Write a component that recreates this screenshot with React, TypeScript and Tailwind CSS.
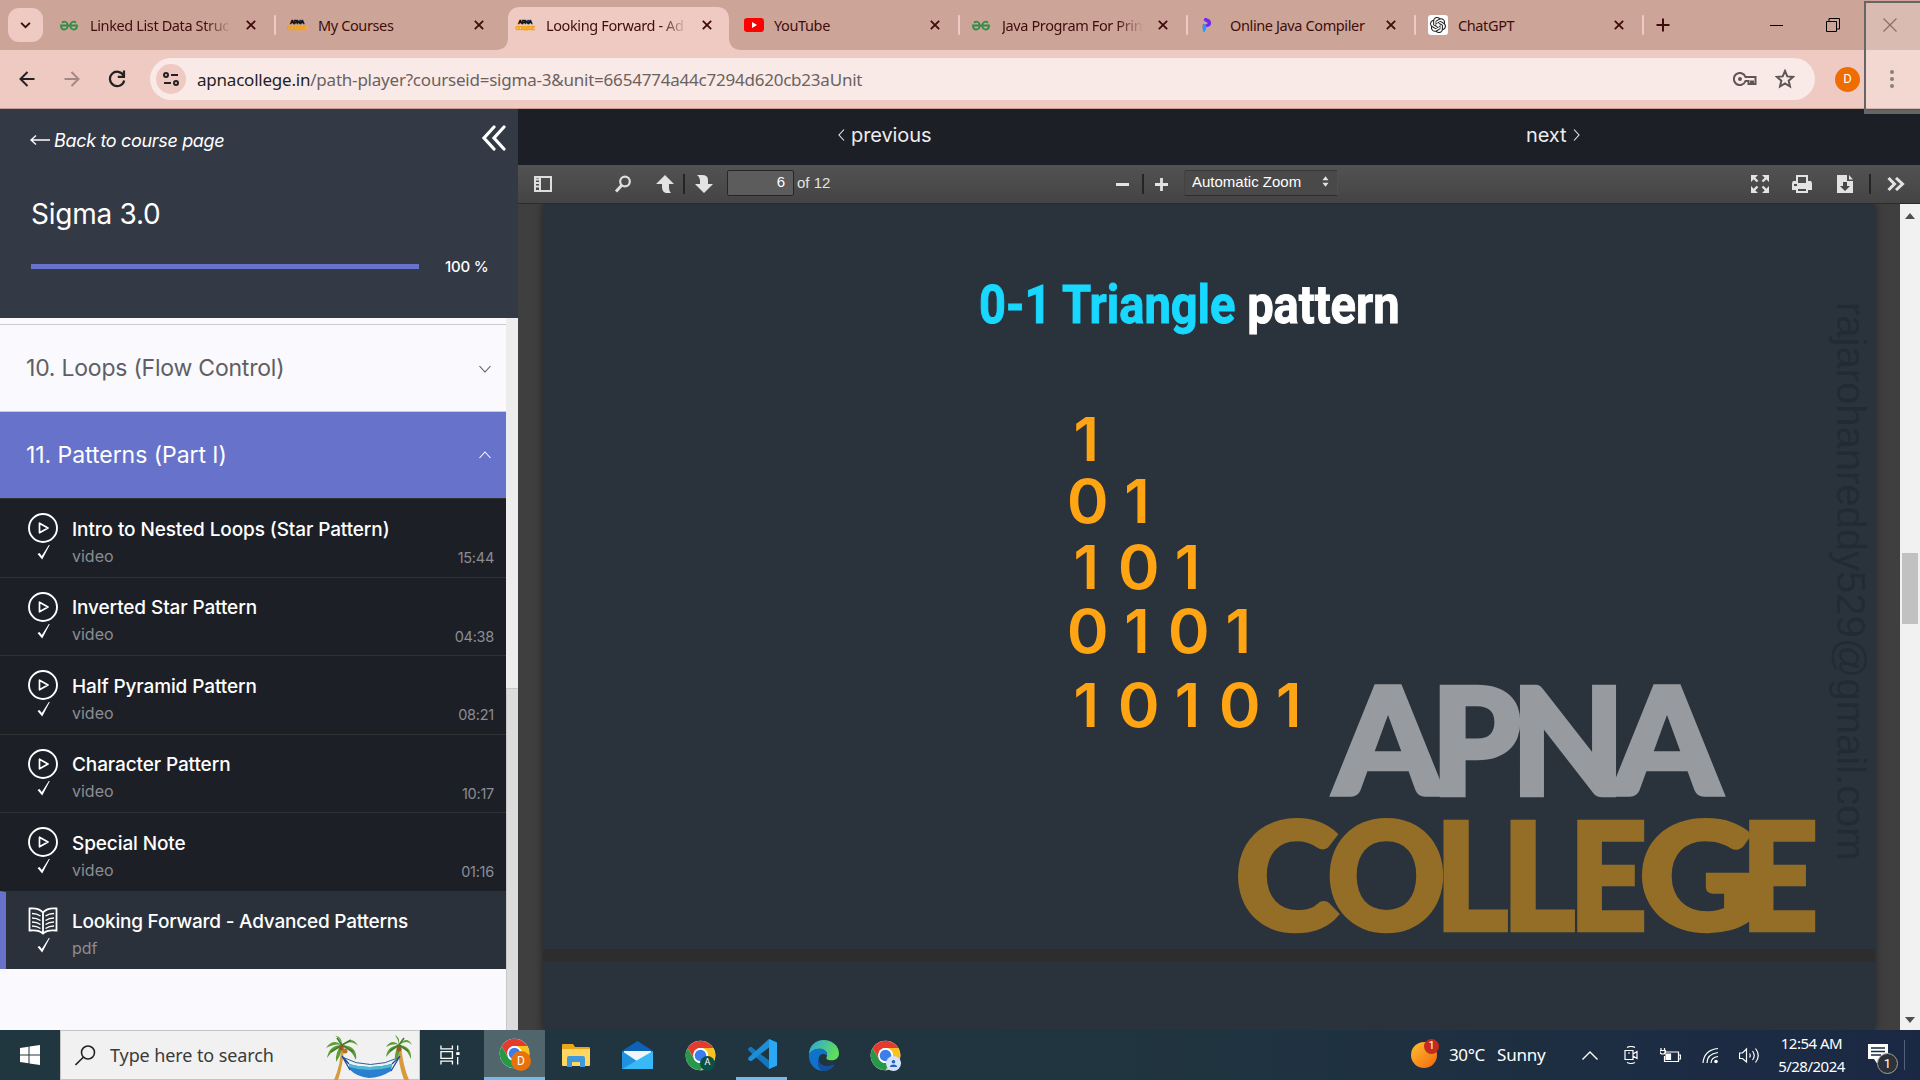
import React from "react";

type P = { children?: React.ReactNode; className?: string };

function ChromeLogo({ className = "" }: P) {
  return (
    <svg viewBox="0 0 48 48" className={className}>
      <circle cx="24" cy="24" r="23" fill="#fff" />
      <path d="M4.1 12.5 A23 23 0 0 1 43.9 12.5 H24 A11.5 11.5 0 0 0 14 18.3 L14 29.7Z" fill="#e33b2e" />
      <path d="M43.9 12.5 A23 23 0 0 1 24 47 L34 29.7 A11.5 11.5 0 0 0 24 12.5Z" fill="#fcc31e" />
      <path d="M4.1 12.5 A23 23 0 0 0 24 47 L34 29.7 A11.5 11.5 0 0 1 14 29.7Z" fill="#279847" />
      <circle cx="24" cy="24" r="11.5" fill="#fff" />
      <circle cx="24" cy="24" r="9" fill="#3b7ded" />
    </svg>
  );
}

function Gfg() {
  return (
    <svg viewBox="0 0 36 20" className="h-[11px] w-[18px]" fill="none" stroke="#2f8d46" strokeWidth="3.6">
      <path d="M4 4.5 C9 0 15.500 3 15.500 10 C15.500 16 11 18 8.500 18 C4 18 2 14.500 2 10 H34 C34 14.500 32 18 27.500 18 C25 18 20.500 16 20.500 10 C20.500 3 27 0 32 4.500" />
    </svg>
  );
}

function ApnaIcon() {
  return (
    <span className="flex w-[18px] flex-col items-center font-['Lato'] font-black">
      <span className="h-[6px] text-[5.500px] leading-[6px] tracking-[-0.5px] text-[#111] [-webkit-text-stroke:0.6px_#111]">APNA</span>
      <span className="h-[6px] text-[5.500px] leading-[6px] tracking-[-0.8px] text-[#f5a21b] [-webkit-text-stroke:0.6px_#f5a21b]">COLLEGE</span>
    </span>
  );
}

function YouTube() {
  return (
    <svg viewBox="0 0 20 14" className="h-[14px] w-5">
      <rect width="20" height="14" rx="3.200" fill="#f00" />
      <path d="M8 4 L13 7 L8 10Z" fill="#fff" />
    </svg>
  );
}

function Programiz() {
  return (
    <svg viewBox="0 0 12 17" className="ml-[2px] h-[16px] w-[10px]">
      <path d="M3 0 C8 0 11 3 11 6 C11 9 8 11 5 11 L1 13 V8 C4 8 6 8 7 6 L2 3Z" fill="#7326f1" />
      <path d="M1 9 L5 7 V13 L3 17 L1 16Z" fill="#12a1fb" />
    </svg>
  );
}

function OpenAI() {
  return (
    <span className="flex h-5 w-5 items-center justify-center rounded-[3px] bg-white">
      <svg viewBox="0 0 24 24" className="h-4 w-4" fill="#222">
        <path d="M22.282 9.821a5.985 5.985 0 0 0-.516-4.910 6.046 6.046 0 0 0-6.510-2.900A6.065 6.065 0 0 0 4.981 4.182a5.985 5.985 0 0 0-3.998 2.900 6.046 6.046 0 0 0 .743 7.097 5.980 5.980 0 0 0 .510 4.911 6.051 6.051 0 0 0 6.515 2.900A5.985 5.985 0 0 0 13.260 24a6.056 6.056 0 0 0 5.772-4.206 5.990 5.990 0 0 0 3.997-2.900 6.056 6.056 0 0 0-.747-7.073zM13.260 22.430a4.476 4.476 0 0 1-2.876-1.040l.141-.081 4.779-2.758a.795.795 0 0 0 .392-.681v-6.737l2.020 1.168a.071.071 0 0 1 .038.052v5.583a4.504 4.504 0 0 1-4.494 4.494zM3.600 18.304a4.470 4.470 0 0 1-.535-3.014l.142.085 4.783 2.759a.771.771 0 0 0 .780 0l5.843-3.369v2.332a.080.080 0 0 1-.033.062L9.740 19.950a4.500 4.500 0 0 1-6.140-1.646zM2.340 7.896a4.485 4.485 0 0 1 2.366-1.973V11.600a.766.766 0 0 0 .388.676l5.815 3.355-2.020 1.168a.076.076 0 0 1-.071 0l-4.830-2.786A4.504 4.504 0 0 1 2.340 7.872zm16.597 3.855-5.833-3.387L15.119 7.200a.076.076 0 0 1 .071 0l4.830 2.791a4.494 4.494 0 0 1-.676 8.105v-5.678a.790.790 0 0 0-.407-.667zm2.010-3.023-.141-.085-4.774-2.782a.776.776 0 0 0-.785 0L9.409 9.230V6.897a.066.066 0 0 1 .028-.061l4.830-2.787a4.500 4.500 0 0 1 6.680 4.660zm-12.640 4.135-2.020-1.164a.080.080 0 0 1-.038-.057V6.075a4.500 4.500 0 0 1 7.375-3.453l-.142.080L8.704 5.460a.795.795 0 0 0-.393.681zm1.097-2.365 2.602-1.500 2.607 1.500v2.999l-2.597 1.500-2.607-1.500z" />
      </svg>
    </span>
  );
}

const tabs = [
  { title: "Linked List Data Struc", icon: <Gfg />, fade: true, sep: true },
  { title: "My Courses", icon: <ApnaIcon />, fade: false, sep: false },
  { title: "Looking Forward - Ad", icon: <ApnaIcon />, fade: true, sep: false, active: true },
  { title: "YouTube", icon: <YouTube />, fade: false, sep: true },
  { title: "Java Program For Prin", icon: <Gfg />, fade: true, sep: true },
  { title: "Online Java Compiler", icon: <Programiz />, fade: false, sep: true },
  { title: "ChatGPT", icon: <OpenAI />, fade: false, sep: true },
];

function TabStrip() {
  return (
    <div className="flex h-[50px] bg-[#cda598] font-['Noto_Sans',sans-serif] text-[#3f0d0b]">
      <div className="mt-2 ml-2 flex h-[34px] w-[35px] items-center justify-center rounded-[11px] bg-[#efcac2]">
        <svg viewBox="0 0 12 8" className="h-[7px] w-[11px]" fill="none" stroke="#3f0d0b" strokeWidth="2.200">
          <path d="M1 1 L6 6 L11 1" />
        </svg>
      </div>
      <div className="ml-[6px] flex">
        {tabs.map((t) => (
          <div
            key={t.title}
            className={
              "relative flex h-[50px] w-[228px] items-center pl-[11px] " +
              (t.active ? "z-10" : "")
            }
          >
            {t.active && (
              <svg viewBox="0 0 245 43" className="absolute top-[7px] left-[-9px] h-[43px] w-[245px]" fill="#efcac2">
                <path d="M0 43 C8 43 12 38 12 31 V12 C12 4 17 0 24 0 H221 C228 0 233 4 233 12 V31 C233 38 237 43 245 43Z" />
              </svg>
            )}
            <span className="relative flex w-5 items-center">{t.icon}</span>
            <span
              className={
                "relative mt-px ml-[10px] w-[143px] overflow-hidden text-[14.500px] tracking-[-0.38px] whitespace-nowrap " +
                (t.fade ? "[mask-image:linear-gradient(to_right,#000_80%,transparent_99%)]" : "")
              }
            >
              {t.title}
            </span>
            <svg viewBox="0 0 12 12" className="relative ml-[13px] h-[10px] w-[10px]" stroke="#3f0d0b" strokeWidth="2.200">
              <path d="M1 1 L11 11 M11 1 L1 11" />
            </svg>
            {t.sep && <span className="absolute top-[15px] right-px h-5 w-[2px] rounded bg-[#efcac2]" />}
          </div>
        ))}
      </div>
      <svg viewBox="0 0 14 14" className="mt-[18px] ml-[11px] h-[14px] w-[14px]" stroke="#3f0d0b" strokeWidth="2">
        <path d="M7 0.500 V13.500 M0.500 7 H13.500" />
      </svg>
      <div className="mt-[18px] ml-[100px] flex h-[14px] items-center text-black">
        <span className="h-px w-[13px] bg-black" />
        <svg viewBox="0 0 14 14" className="ml-[43px] h-[14px] w-[14px]" fill="none" stroke="#000">
          <path d="M0.500 3.500 H10.500 V13.500 H0.500Z M3 3 V0.500 H13.500 V11 H11" />
        </svg>
        <svg viewBox="0 0 14 14" className="ml-[43px] h-[14px] w-[14px]" stroke="#5c3833" strokeWidth="1.100">
          <path d="M0.500 0.500 L13.500 13.500 M13.500 0.500 L0.500 13.500" />
        </svg>
      </div>
    </div>
  );
}

function AddressBar() {
  return (
    <div className="flex h-[59px] items-center border-b border-[#c49d93] bg-[#efcac2] font-['Noto_Sans',sans-serif]">
      <svg viewBox="0 0 16 16" className="ml-[19px] h-4 w-4" fill="none" stroke="#222" strokeWidth="2">
        <path d="M15.500 8 H2 M8.500 1 L1.500 8 L8.500 15" />
      </svg>
      <svg viewBox="0 0 16 16" className="ml-[29px] h-4 w-4" fill="none" stroke="#a38984" strokeWidth="2">
        <path d="M0.500 8 H14 M7.500 1 L14.500 8 L7.500 15" />
      </svg>
      <svg viewBox="0 0 18 18" className="ml-[28px] h-[18px] w-[18px]" fill="none" stroke="#222" strokeWidth="2.200">
        <path d="M15.500 5.500 A7.200 7.200 0 1 0 16.200 10.500 M16 0.500 V6.800 H9.800" />
      </svg>
      <div className="ml-6 flex h-[42px] w-[1665px] items-center rounded-full bg-[#f9eae7]">
        <div className="ml-[6px] flex h-[30px] w-[30px] items-center justify-center rounded-full bg-[#efcac2]">
          <svg viewBox="0 0 16 14" className="h-[14px] w-4" fill="none" stroke="#222" strokeWidth="2">
            <circle cx="3" cy="3" r="2" />
            <path d="M8 3 H15 M1 11 H8" />
            <circle cx="13" cy="11" r="2" />
          </svg>
        </div>
        <span className="mt-px ml-[11px] w-[1536px] text-[17px] tracking-[-0.22px] text-[#6b6260]">
          <span className="text-[#1f1f1f]">apnacollege.in</span>/path-player?courseid=sigma-3&amp;unit=6654774a44c7294d620cb23aUnit
        </span>
        <svg viewBox="0 0 24 14" className="h-[14px] w-6 shrink-0" fill="none" stroke="#5f5654" strokeWidth="2">
          <path d="M12.500 5 A6 6 0 1 0 12.500 9 H15.500 V12 H18 V9.500 H20 V12 H22.500 V5Z" />
          <circle cx="7" cy="7" r="2" fill="#5f5654" stroke="none" />
        </svg>
        <svg viewBox="0 0 20 20" className="ml-[18px] h-5 w-5 shrink-0" fill="none" stroke="#5f5654" strokeWidth="2">
          <path d="M10 2 L12.300 7.400 L18 7.900 L13.700 11.700 L15 17.500 L10 14.400 L5 17.500 L6.300 11.700 L2 7.900 L7.700 7.400Z" />
        </svg>
      </div>
      <div className="ml-5 flex h-[25px] w-[25px] items-center justify-center rounded-full bg-[#ef6c00] font-['Roboto'] text-[13px] text-white">
        D
      </div>
      <div className="ml-[30px] flex flex-col gap-[3px]">
        <span className="h-1 w-1 rounded-full bg-[#5f5654]" />
        <span className="h-1 w-1 rounded-full bg-[#5f5654]" />
        <span className="h-1 w-1 rounded-full bg-[#5f5654]" />
      </div>
    </div>
  );
}

const lessons = [
  { title: "Intro to Nested Loops (Star Pattern)", kind: "video", time: "15:44" },
  { title: "Inverted Star Pattern", kind: "video", time: "04:38" },
  { title: "Half Pyramid Pattern", kind: "video", time: "08:21" },
  { title: "Character Pattern", kind: "video", time: "10:17" },
  { title: "Special Note", kind: "video", time: "01:16" },
  { title: "Looking Forward - Advanced Patterns", kind: "pdf", time: "" },
];

function PlayIcon() {
  return (
    <svg viewBox="0 0 30 30" className="h-[30px] w-[30px]" fill="none" stroke="#fff" strokeWidth="1.900" strokeLinejoin="round">
      <circle cx="15" cy="15" r="14" />
      <path d="M11.500 10.200 L20 15 L11.500 19.800Z" strokeWidth="1.700" />
    </svg>
  );
}

function BookIcon() {
  return (
    <svg viewBox="0 0 30 30" className="h-[30px] w-[30px]" fill="none" stroke="#fff" strokeWidth="1.800">
      <path d="M15 6.500 C12 3 6 2 1.500 2.500 V24.500 C6 24 12 24.500 15 27.500 C18 24.500 24 24 28.500 24.500 V2.500 C24 2 18 3 15 6.500 V27" />
      <path strokeWidth="1.400" d="M4 7.500 Q9 7.500 12.500 10 M4 12 Q9 12 12.500 14.500 M4 16 Q9 16 12.500 18.500 M4 20 Q9 20 12.500 22.500 M26 7.500 Q21 7.500 17.500 10 M26 12 Q21 12 17.500 14.500 M26 16 Q21 16 17.500 18.500 M26 20 Q21 20 17.500 22.500" />
    </svg>
  );
}

function Sidebar() {
  return (
    <aside className="flex w-[518px] shrink-0 flex-col font-['Inter',sans-serif]">
      <div className="h-[209px] bg-[#333945] text-white">
        <div className="flex h-[62px] items-center pl-[30px]">
          <svg viewBox="0 0 20 10" className="h-[10px] w-5" fill="none" stroke="#fff" strokeWidth="1.300">
            <path d="M6 0.500 L1 5 L6 9.500 M1 5 H20" />
          </svg>
          <span className="ml-[4px] w-[427px] text-[18px] tracking-[-0.33px] italic [font-weight:450]">Back to course page</span>
          <svg viewBox="0 0 26 26" className="mt-[-5px] h-[26px] w-[26px]" fill="none" stroke="#fff" strokeWidth="3.200" strokeLinecap="round">
            <path d="M13 2 L3 13 L13 24 M23 2 L13 13 L23 24" />
          </svg>
        </div>
        <div className="mt-[22px] pl-[31px] text-[28px] leading-[42px] tracking-[-0.25px]">Sigma 3.0</div>
        <div className="mt-[18px] flex items-center pl-[31px]">
          <div className="h-[5px] w-[388px] bg-[#6772cb]" />
          <span className="mt-[2px] ml-[26px] text-[15px] leading-6 tracking-[-0.2px] [font-weight:450]">100 %</span>
        </div>
      </div>
      <div className="flex min-h-0 flex-1">
        <div className="flex w-[506px] flex-col bg-[#f9f9fe]">
          <div className="h-[7px] border-b border-[#cdcdc8]" />
          <div className="flex h-[87px] items-center justify-between border-b border-[#cdcdc8] pt-px pr-[15px] pl-[26px] text-[23px] tracking-[-0.22px] text-[#5f5f63]">
            10. Loops (Flow Control)
            <svg viewBox="0 0 12 8" className="h-2 w-3" fill="none" stroke="#555" strokeWidth="1.100">
              <path d="M0.500 1 L6 7 L11.500 1" />
            </svg>
          </div>
          <div className="flex h-[86px] items-center justify-between bg-[#6772cb] pr-[15px] pl-[26px] text-[23px] tracking-[-0.05px] text-white">
            11. Patterns (Part I)
            <svg viewBox="0 0 12 8" className="h-2 w-3" fill="none" stroke="#fff" strokeWidth="1.100">
              <path d="M0.500 7 L6 1 L11.500 7" />
            </svg>
          </div>
          {lessons.map((l) => (
            <div
              key={l.title}
              className={
                "flex h-[78.500px] border-t border-[#303132] pr-3 " +
                (l.kind === "pdf" ? "border-l-[6px] border-l-[#6772cb] bg-[#2b313b] pl-[22px]" : "bg-[#1d1f27] pl-[28px]")
              }
            >
              <div className="flex w-[30px] flex-col items-center pt-[14px]">
                {l.kind === "pdf" ? <BookIcon /> : <PlayIcon />}
                <svg viewBox="0 0 13 15" className="mt-[2px] h-[15px] w-[13px]" fill="#fff">
                  <path d="M0.500 9 L2.500 8 L4.800 11 L11.800 0 H12.800 L5.200 14.500Z" />
                </svg>
              </div>
              <div className="ml-[14px] flex-1 pt-[15.500px]">
                <div
                  className={
                    "text-[19px] leading-[30px] whitespace-nowrap text-white [font-weight:450] " +
                    (l.kind === "pdf" ? "tracking-[-0.22px]" : "tracking-[-0.11px]")
                  }
                >
                  {l.title}
                </div>
                <div className="text-[16px] leading-[23px] text-[#8b8d92]">{l.kind}</div>
              </div>
              <div className="pt-[47px] text-[14.500px] leading-6 tracking-[-0.25px] text-[#8b8d92]">{l.time}</div>
            </div>
          ))}
        </div>
        <div className="w-3 bg-[#ededed] pt-[370px]">
          <div className="h-full border-t border-l border-[#c8c8c8] bg-[#dcdcdc]" />
        </div>
      </div>
    </aside>
  );
}

function PdfToolbar() {
  return (
    <div className="flex h-[39px] items-center border-b border-[#2b2b2b] bg-linear-to-b from-[#525252] to-[#444444] font-['Liberation_Sans',sans-serif] text-[15px] text-[#e3e3e3]">
      <svg viewBox="0 0 18 18" className="ml-4 h-[18px] w-[18px]" fill="none" stroke="#dedede" strokeWidth="2">
        <path d="M1 2 H17 V16 H1Z M6 2 V16 M2 4.500 H5 M2 8 H5 M2 11.500 H5" />
      </svg>
      <svg viewBox="0 0 18 18" className="ml-[62px] h-[18px] w-[18px]" fill="none" stroke="#dedede" strokeWidth="2.200">
        <circle cx="11" cy="6.500" r="4.800" />
        <path d="M8 10 L2 16.500" strokeWidth="3" />
      </svg>
      <svg viewBox="0 0 18 18" className="ml-[24px] h-[18px] w-[18px]" fill="#e3e3e3">
        <path d="M9 0 L18 9 H13 V13 Q13 16 15 18 H10 Q6 17 6 12 V9 H0Z" />
      </svg>
      <span className="ml-[9px] h-5 w-[2px] bg-[#242424]" />
      <svg viewBox="0 0 18 18" className="ml-[10px] h-[18px] w-[18px]" fill="#e3e3e3">
        <path d="M9 18 L18 9 H13 V5 Q13 0 7 0 H2 Q5 2 5 5 V9 H0Z" />
      </svg>
      <div className="mt-[-3px] ml-[14px] flex h-[26px] w-[67px] items-center justify-end rounded-[2px] border border-[#262626] bg-[#5c5c5c] pr-[8px] text-white">6</div>
      <span className="ml-[3px] w-[319px] pb-[2px]">of 12</span>
      <span className="h-[3px] w-[13px] bg-[#e3e3e3]" />
      <span className="ml-[13px] h-5 w-[2px] bg-[#242424]" />
      <svg viewBox="0 0 14 14" className="ml-[11px] h-[13px] w-[13px]" stroke="#e3e3e3" strokeWidth="3">
        <path d="M7 0 V14 M0 7 H14" />
      </svg>
      <div className="mt-[-3px] ml-4 flex h-[26px] w-[154px] items-center justify-between rounded-[2px] border border-t-[#383838] border-r-[#505050] border-b-[#2e2e2e] border-l-[#424242] bg-[#494949] pr-[8px] pl-[7px] text-[15px] text-white">
        Automatic Zoom
        <svg viewBox="0 0 8 12" className="mt-[-2px] h-[11px] w-[7px]" fill="#e3e3e3">
          <path d="M4 0 L7.500 4.500 H0.500Z M4 12 L7.500 7.500 H0.500Z" />
        </svg>
      </div>
      <svg viewBox="0 0 18 18" className="ml-[413px] h-[18px] w-[18px]" fill="#e3e3e3" stroke="#e3e3e3" strokeWidth="2.400">
        <path strokeWidth="0" d="M0 0 H7 L0 7Z M18 0 V7 L11 0Z M0 18 V11 L7 18Z M18 18 H11 L18 11Z" />
        <path d="M2 2 L6.500 6.500 M16 2 L11.500 6.500 M2 16 L6.500 11.500 M16 16 L11.500 11.500" />
      </svg>
      <svg viewBox="0 0 20 18" className="ml-[23px] h-[18px] w-5" fill="#e3e3e3">
        <path fillRule="evenodd" d="M4 0 H16 V6 H19 Q20 7 20 9 V15 H16 V18 H4 V15 H0 V9 Q0 7 1 6 H4Z M6 2 V8 H14 V2Z M6 14 V16 H14 V14Z M2 9 V11 H5 V9Z" />
      </svg>
      <svg viewBox="0 0 16 18" className="ml-[25px] h-[18px] w-4">
        <path fill="#e3e3e3" d="M0 0 H10 V6 H16 V18 H0Z M12 0 L16 4.500 H12Z" />
        <path fill="#474747" d="M6 7 H10 V11 H13 L8 16 L3 11 H6Z" />
      </svg>
      <span className="ml-4 h-5 w-[2px] bg-[#242424]" />
      <svg viewBox="0 0 18 14" className="ml-4 h-[14px] w-[18px]" fill="none" stroke="#e3e3e3" strokeWidth="3">
        <path d="M1.500 1 L7.500 7 L1.500 13 M9 1 L15.500 7 L9 13" />
      </svg>
    </div>
  );
}

const triangle = ["1", "01", "101", "0101", "10101"];
const rowTop = ["top-[205px]", "top-[267px]", "top-[333px]", "top-[397px]", "top-[471px]"];

const logoLetters = [
  { c: "A", x: 1334, w: 108, y: 795, f: "#979b9f" },
  { c: "P", x: 1431, w: 90, y: 795, f: "#979b9f" },
  { c: "N", x: 1511, w: 114, y: 795, f: "#979b9f" },
  { c: "A", x: 1613, w: 108, y: 795, f: "#979b9f" },
  { c: "C", x: 1235, w: 103, y: 930, f: "#946e27" },
  { c: "O", x: 1327, w: 119, y: 930, f: "#946e27" },
  { c: "L", x: 1435, w: 73, y: 930, f: "#946e27" },
  { c: "L", x: 1502, w: 73, y: 930, f: "#946e27" },
  { c: "E", x: 1569, w: 78, y: 930, f: "#946e27" },
  { c: "G", x: 1639, w: 117, y: 930, f: "#946e27" },
  { c: "E", x: 1741, w: 77, y: 930, f: "#946e27" },
];

function Slide() {
  return (
    <div className="relative h-[745px] bg-[#2a333c]">
      <div className="absolute top-[61px] left-[436px] origin-left scale-x-[0.871] font-['Roboto',sans-serif] text-[54px] leading-[80px] font-bold whitespace-nowrap text-white">
        <span className="text-[#18d8ff] [-webkit-text-stroke:1px_#18d8ff]">0-1 Triangle</span>{" "}
        <span className="[-webkit-text-stroke:1px_#fff]">pattern</span>
      </div>
      {triangle.map((row, i) => (
        <div key={row} className={"absolute left-[518px] flex h-[60px] font-['Inter',sans-serif] text-[60px] leading-[60px] font-semibold text-[#ffa412] " + rowTop[i]}>
          {row.split("").map((d, j) => (
            <span key={j} className="w-[50.600px] text-center">
              {d === "0" ? <span className="ml-[3px] inline-block scale-x-[1.06]">0</span> : d}
            </span>
          ))}
        </div>
      ))}
      <svg viewBox="1220 670 620 279" className="absolute right-[35px] bottom-0 h-[279px] w-[620px]">
        {logoLetters.map((l) => (
          <text
            key={l.x}
            x={l.x}
            y={l.y}
            fill={l.f}
            stroke={l.f}
            strokeWidth="4.500"
            fontFamily="Lato"
            fontWeight="900"
            fontSize="149"
            textLength={l.w}
            lengthAdjust="spacingAndGlyphs"
          >
            {l.c}
          </text>
        ))}
      </svg>
      <div className="absolute top-[98px] right-px font-['Liberation_Sans',sans-serif] text-[40px] leading-[46px] whitespace-nowrap text-[#222b34] [writing-mode:vertical-rl]">
        rajarohanreddy529@gmail.com
      </div>
    </div>
  );
}

function Viewer() {
  return (
    <main className="flex min-w-0 flex-1 flex-col">
      <div className="flex h-[56px] items-center bg-[#1d1f27] pb-1 font-['Inter',sans-serif] text-[20px] text-[#ededed]">
        <svg viewBox="0 0 7 12" className="ml-[320px] h-3 w-[7px]" fill="none" stroke="#ededed" strokeWidth="1.100">
          <path d="M6 0.500 L1 6 L6 11.500" />
        </svg>
        <span className="ml-[6px] w-[675px] tracking-[-0.1px]">previous</span>
        <span className="tracking-[-0.1px]">next</span>
        <svg viewBox="0 0 7 12" className="ml-[7px] h-3 w-[7px]" fill="none" stroke="#ededed" strokeWidth="1.100">
          <path d="M1 0.500 L6 6 L1 11.500" />
        </svg>
      </div>
      <PdfToolbar />
      <div className="flex min-h-0 flex-1">
        <div className="flex-1 overflow-hidden bg-[#3f3f3f] px-[25px]">
          <div className="flex h-full flex-col gap-[13px] bg-[#2d2d2d] shadow-[0_0_8px_#222]">
            <Slide />
            <div className="flex-1 bg-[#2a333c]" />
          </div>
        </div>
        <div className="flex w-5 flex-col items-center bg-[#f1f1f1]">
          <svg viewBox="0 0 10 6" className="mt-[9px] h-[6px] w-[10px]" fill="#505050">
            <path d="M5 0 L10 6 H0Z" />
          </svg>
          <div className="mt-[334px] h-[71px] w-4 bg-[#c1c1c1]" />
          <svg viewBox="0 0 10 6" className="mt-auto mb-[7px] h-[6px] w-[10px]" fill="#505050">
            <path d="M5 6 L10 0 H0Z" />
          </svg>
        </div>
      </div>
    </main>
  );
}

function Hammock() {
  return (
    <svg viewBox="0 0 88 46" className="h-[46px] w-[88px]">
      <path d="M9 46 Q16 30 16 12 L19 12 Q18 32 13 46Z M79 46 Q73 30 73 12 L76 12 Q78 32 84 46Z" fill="#d99a3c" />
      <path d="M17 23 Q45 38 75 23" fill="none" stroke="#2b5e9c" strokeWidth="1" />
      <path d="M24 30 Q44 36 67 30 L66 37 Q55 44 44 44 Q32 43 24 35Z" fill="#2b7fd0" />
      <path d="M24 30 Q44 36 67 30 L67 33 Q44 39 24 33Z" fill="#4fb9cf" />
      <path d="M17 22 L24 30 M75 22 L67 30 M17 22 L25 36 M75 22 L66 37" stroke="#1e4f97" strokeWidth="1.300" />
      <g fill="#5f9e34">
        <path d="M17 11 Q8 4 1 14 Q10 9 17 11 Q4 11 2 24 Q9 14 17 11 Q10 17 11 28 Q17 20 17 11 Q26 15 31 26 Q33 12 17 11 Q26 5 33 12 Q28 1 17 11 Q17 2 10 2 Q15 4 17 11Z" />
        <path d="M74 11 Q67 4 61 13 Q68 9 74 11 Q62 12 61 23 Q68 15 74 11 Q69 18 70 28 Q76 20 74 11 Q82 15 86 25 Q87 12 74 11 Q82 5 87 11 Q82 1 74 11 Q75 3 70 1 Q73 5 74 11Z" />
      </g>
      <g stroke="#3f7d2b" strokeWidth="1.600" fill="none">
        <path d="M17 11 L6 18 M17 11 L28 18 M17 11 L12 4 M17 11 L26 6 M74 11 L65 17 M74 11 L83 17 M74 11 L79 4" />
      </g>
      <circle cx="16" cy="14" r="2.500" fill="#9b5a1e" />
      <circle cx="20" cy="17" r="2.500" fill="#b87529" />
      <circle cx="74" cy="15" r="2.500" fill="#9b5a1e" />
    </svg>
  );
}

function Badge({ children, className = "" }: P) {
  return (
    <span className={"absolute flex items-center justify-center rounded-full font-['Roboto'] text-white " + className}>{children}</span>
  );
}

function Taskbar() {
  return (
    <footer className="flex h-[50px] items-center bg-linear-to-r from-[#20373f] via-[#20343f] via-60% to-[#1b2844] font-['Noto_Sans',sans-serif] text-white">
      <svg viewBox="0 0 20 20" className="ml-5 h-5 w-5" fill="#fff">
        <path d="M0 3 L8.500 1.700 V9.500 H0Z M9.500 1.500 L20 0 V9.500 H9.500Z M0 10.500 H8.500 V18.300 L0 17Z M9.500 10.500 H20 V20 L9.500 18.500Z" />
      </svg>
      <div className="ml-5 flex h-[50px] w-[360px] items-center border border-[#c4c4c4] bg-[#f1f1f1] pl-[14px] text-[#3a3a3a]">
        <svg viewBox="0 0 21 21" className="h-[21px] w-[21px]" fill="none" stroke="#222" strokeWidth="1.600">
          <circle cx="13" cy="7.500" r="6.500" />
          <path d="M8.300 12.300 L0.500 20" />
        </svg>
        <span className="ml-[14px] w-[215px] text-[18px] tracking-[-0.1px]">Type here to search</span>
        <div className="mt-[3px]"><Hammock /></div>
      </div>
      <svg viewBox="0 0 22 20" className="ml-5 h-5 w-[21px]" fill="none" stroke="#fff" strokeWidth="1.400">
        <path d="M1 0 V3.500 H13 V0 M1 6.500 H13 V13.500 H1Z M1 20 V16.500 H13 V20 M18.500 0 V5 M18.500 12 V20" />
        <path d="M17 8.500 H20.500" strokeWidth="3" />
      </svg>
      <div className="relative ml-[23px] flex h-[50px] w-[61px] items-center justify-center border-b-[3px] border-[#76b9ed] bg-[#50666c]">
        <ChromeLogo className="h-[31px] w-[31px]" />
        <Badge className="top-[21px] left-[27px] h-5 w-5 bg-[#e8710a] text-[12px]">D</Badge>
      </div>
      <svg viewBox="0 0 28 25" className="ml-[17px] h-[25px] w-7">
        <path d="M0 2 Q0 1 1 1 H11 L13 4 H27 Q28 4 28 5 V22 H0Z" fill="#e8a81a" />
        <path d="M0 6 H28 V22 Q28 23 27 23 H1 Q0 23 0 22Z" fill="#ffd660" />
        <path d="M5 24 V15 Q5 13 7 13 H21 Q23 13 23 15 V24 H18 V19 H10 V24Z" fill="#4099dc" />
      </svg>
      <svg viewBox="0 0 31 28" className="ml-8 h-7 w-[31px]">
        <path d="M0 10 L15.500 0 L31 10 V28 H0Z" fill="#0d62b8" />
        <path d="M2 10 H29 V20 H2Z" fill="#eef5fb" />
        <path d="M0 10 L15.500 20.500 L0 28Z" fill="#1f93e0" />
        <path d="M31 10 L0 28 H31Z" fill="#38b8f6" />
      </svg>
      <div className="relative ml-8 h-[31px] w-[31px]">
        <ChromeLogo className="h-[31px] w-[31px]" />
        <Badge className="top-[16px] left-[15px] h-[15px] w-[15px] bg-[#0b4f45] text-[9px]">A</Badge>
      </div>
      <div className="ml-[20px] flex h-[50px] w-[51px] items-center justify-center border-b-[3px] border-[#76b9ed]">
        <svg viewBox="0 0 30 30" className="h-[30px] w-[30px]">
          <path d="M22 0 L30 3.500 V26.500 L22 30 L1.500 11.500 L1 9.500 L3 8 L4.500 8 L22 21.500Z" fill="#1277bd" />
          <path d="M22 0 V8.500 L4.500 22 L3 22 L1 20.500 L1.500 18.500Z" fill="#1c8fd8" />
          <path d="M22 0 L30 3.500 V26.500 L22 30Z" fill="#2ba8f3" />
        </svg>
      </div>
      <svg viewBox="0 0 32 32" className="ml-[21px] h-[31px] w-[31px]">
        <defs>
          <linearGradient id="edgeTop" x1="0" y1="0" x2="1" y2="0.400">
            <stop offset="0" stopColor="#2aa5df" />
            <stop offset="1" stopColor="#5fdc5b" />
          </linearGradient>
        </defs>
        <path d="M1 15 C1 6 8 0 16 0 C25 0 32 6 32 14 C32 19 28 21 24 21 C20 21 18 19.500 19.500 17 C21 13 17 9 12 9 C7 9 3 12 1 15Z" fill="url(#edgeTop)" />
        <path d="M1 15 C3 11 7 9 12 9 C17 9 20.500 12.500 19.500 16 C17 13 11 14 11 20 C11 26 18 29 27 26 C20 34 10 33 5 27 C2 24 0.500 19 1 15Z" fill="#1172c9" />
        <path d="M11 20 C11 26 18 29 28 25 C25 30 20 32 16 32 C11 31 9 25 11 20Z" fill="#154f9c" />
      </svg>
      <div className="relative ml-[31px] h-[31px] w-[31px]">
        <ChromeLogo className="h-[31px] w-[31px]" />
        <Badge className="top-[16px] left-[16px] h-[15px] w-[15px] bg-[#d3e3fd]">
          <svg viewBox="0 0 10 10" className="h-[9px] w-[9px]" fill="#2a5fc0">
            <circle cx="5" cy="3" r="2" />
            <path d="M1 9 Q1 6 5 6 Q9 6 9 9Z" />
          </svg>
        </Badge>
      </div>
      <div className="relative ml-[510px] h-[26px] w-[26px] rounded-full bg-linear-to-br from-[#fbc02d] to-[#f2640c]">
        <Badge className="top-[-3px] left-[13px] h-[15px] w-[15px] bg-[#c42b1c] text-[11px]">1</Badge>
      </div>
      <span className="ml-3 w-12 text-[17px] tracking-[-0.4px]">30°C</span>
      <span className="w-[85px] text-[17px] tracking-[-0.2px]">Sunny</span>
      <svg viewBox="0 0 16 9" className="h-[9px] w-4" fill="none" stroke="#fff" strokeWidth="1.400">
        <path d="M0.500 8.500 L8 1 L15.500 8.500" />
      </svg>
      <svg viewBox="0 0 14 18" className="ml-[26px] h-[18px] w-[14px]" fill="none" stroke="#fff" strokeWidth="1.200">
        <path d="M1 4.500 H9 V13.500 H1Z M9 8 L13 5.500 V12.500 L9 10 M3 1.500 Q7 -0.500 11 1.500 M3 16.500 Q7 18.500 11 16.500 M4 7 H6" />
      </svg>
      <svg viewBox="0 0 21 15" className="ml-[22px] h-[15px] w-[21px]" fill="none" stroke="#fff" strokeWidth="1.200">
        <path d="M4 4 H18.500 V13.500 H4.500 V8 M19 7 H20.500 V11 H19 M1 0 V2 M4.500 0 V2 M0 2.500 H5.500 V4 Q5.500 6 3 6 Q0 6 0 4Z" />
        <path d="M6 6 H10.500 V11.500 H6Z" fill="#fff" />
      </svg>
      <svg viewBox="0 0 17 17" className="ml-[21px] h-[17px] w-[17px]" fill="none" stroke="#fff" strokeWidth="1.200">
        <path d="M1 16 Q2 3 16 1.500 M5 16 Q5 7 16 5.500 M9 16 Q9 10.500 16 9.500" />
        <circle cx="14" cy="14.500" r="1.800" fill="#fff" stroke="none" />
      </svg>
      <svg viewBox="0 0 21 17" className="ml-[20px] h-[17px] w-[21px]" fill="none" stroke="#fff" strokeWidth="1.200">
        <path d="M0.500 6 H3.500 L7.500 2 V15 L3.500 11.500 H0.500Z M10.500 6.500 Q12 8.500 10.500 10.500 M13.500 4 Q17 8.500 13.500 13 M16.500 1.500 Q22 8.500 16.500 15.500" />
      </svg>
      <div className="ml-[13px] flex w-[77px] flex-col items-center text-[15px] leading-[23px] tracking-[-0.5px]">
        <span>12:54 AM</span>
        <span>5/28/2024</span>
      </div>
      <div className="relative ml-[18px] h-[30px] w-[37px] border-r border-[#50617a]">
        <svg viewBox="0 0 20 20" className="absolute top-[4px] left-0 h-5 w-5">
          <path d="M0 0 H20 V15 H13 L9 19.500 L6 15 H0Z" fill="#fff" />
          <path d="M3 4 H17 M3 7.500 H17 M3 11 H13" stroke="#1b2844" strokeWidth="1.400" />
        </svg>
        <Badge className="top-[13px] left-[9px] h-[21px] w-[21px] border border-[#a0a0a0] bg-[#2f3138] text-[13px]">1</Badge>
      </div>
    </footer>
  );
}

export default function App() {
  return (
    <div className="relative flex h-[1080px] w-[1920px] flex-col overflow-hidden bg-[#cda598]">
      <TabStrip />
      <AddressBar />
      <div className="flex min-h-0 flex-1">
        <Sidebar />
        <Viewer />
      </div>
      <Taskbar />
      <div className="absolute top-px right-[-2px] h-[113px] w-[58px] border-2 border-b-4 border-[#666565] bg-white/25" />
    </div>
  );
}
